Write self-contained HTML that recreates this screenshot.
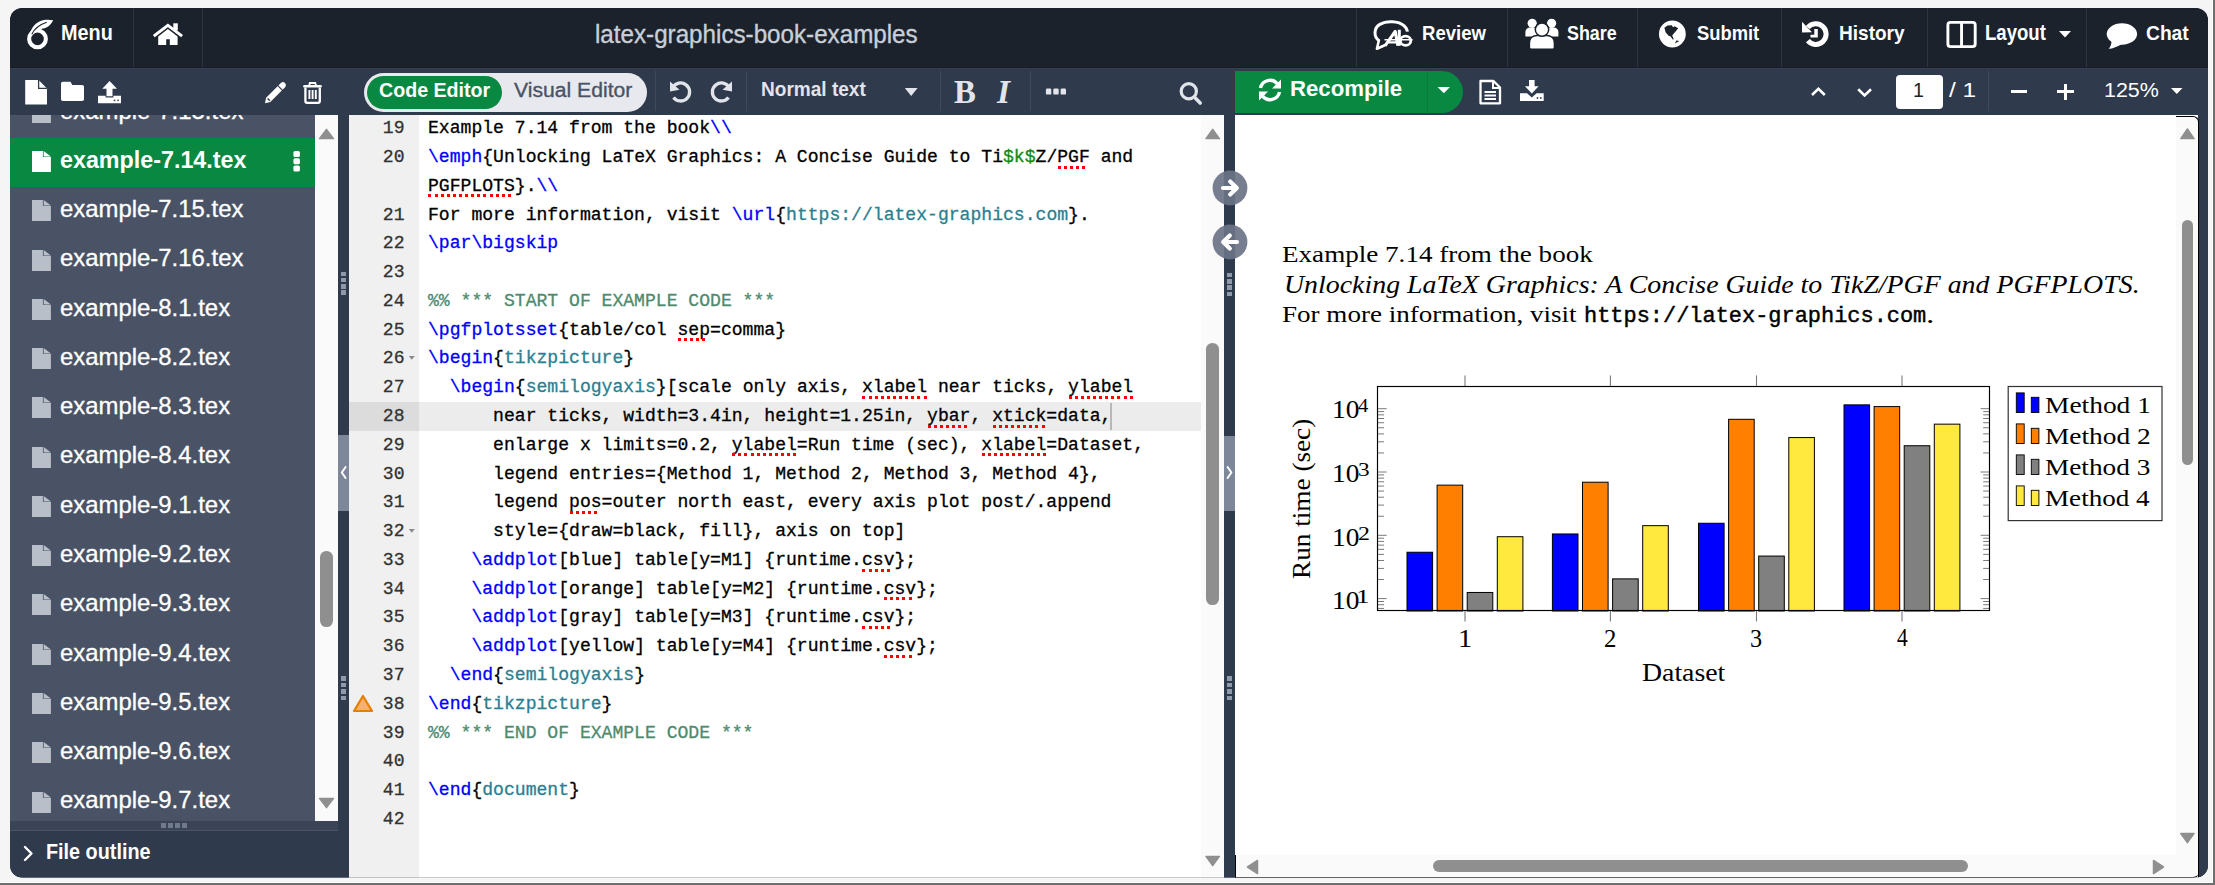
<!DOCTYPE html>
<html><head><meta charset="utf-8"><style>
html,body{margin:0;padding:0}
body{width:2215px;height:885px;background:#f5f5f5;position:relative;overflow:hidden}
.b{position:absolute;display:block}
.t{position:absolute;white-space:pre;line-height:1;transform-origin:0 0}
.code{position:absolute;white-space:pre;font-family:"Liberation Mono",monospace;line-height:1;color:#000;-webkit-text-stroke-width:0.3px}
</style></head><body>
<div class="b" style="left:0px;top:882px;width:2215.00px;height:1.00px;background:#ffffff;"></div>
<div class="b" style="left:2212px;top:0px;width:1.00px;height:885.00px;background:#ffffff;"></div>
<div class="b" style="left:0px;top:883px;width:2215.00px;height:2.00px;background:#6e6e6e;"></div>
<div class="b" style="left:2213px;top:0px;width:2.00px;height:885.00px;background:#6e6e6e;"></div>
<div class="b" style="left:0;top:0;width:2215px;height:885px;clip-path:inset(8px 7px 7.5px 10px round 12px)">
<div class="b" style="left:10px;top:8px;width:2198.00px;height:870.00px;background:#2f3a4c;"></div>
<div class="b" style="left:10px;top:8px;width:2198px;height:59px;background:#1b222c;border-radius:12px 12px 0 0"></div>
<div class="b" style="left:133px;top:8px;width:1.00px;height:59.00px;background:#2c3544;"></div>
<div class="b" style="left:202px;top:8px;width:1.00px;height:59.00px;background:#2c3544;"></div>
<div class="b" style="left:1356px;top:8px;width:1.00px;height:59.00px;background:#2c3544;"></div>
<div class="b" style="left:1507px;top:8px;width:1.00px;height:59.00px;background:#2c3544;"></div>
<div class="b" style="left:1637px;top:8px;width:1.00px;height:59.00px;background:#2c3544;"></div>
<div class="b" style="left:1781px;top:8px;width:1.00px;height:59.00px;background:#2c3544;"></div>
<div class="b" style="left:1927px;top:8px;width:1.00px;height:59.00px;background:#2c3544;"></div>
<div class="b" style="left:2086px;top:8px;width:1.00px;height:59.00px;background:#2c3544;"></div>
<svg class="b" style="left:22px;top:15px;" width="36" height="38" viewBox="0 0 36 38"><circle cx="15.5" cy="23.9" r="8.35" fill="none" stroke="#fff" stroke-width="4.1"/>
<path d="M7.6 20.5 C8.5 13 14 6.5 22 5 C25 4.5 28 4.6 31.2 5.2 C29 9.5 26 12.6 21 13.6 C16 14.5 12.5 16.5 10.6 20 Z" fill="#fff"/>
<path d="M9.8 19.2 C12.5 13.8 17 9.8 24.8 7.3" fill="none" stroke="#1b222c" stroke-width="1.1"/></svg>
<div class="t" style="left:60.56px;top:22.85px;font-size:21.24px;font-family:'Liberation Sans', sans-serif;color:#fff;font-weight:bold;transform:scaleX(0.9332);">Menu</div>
<svg class="b" style="left:150px;top:18px;" width="36" height="32" viewBox="0 0 36 32"><path d="M5 17.2 L17.9 7.3 L30.9 17.2" fill="none" stroke="#fff" stroke-width="3" stroke-linejoin="miter" stroke-linecap="square"/>
<rect x="23.3" y="5.3" width="4.5" height="7" fill="#fff"/>
<path d="M8.2 18.6 L17.9 11 L27.6 18.6 L27.6 27 L19.8 27 L19.8 21.3 L16.2 21.3 L16.2 27 L8.2 27 Z" fill="#fff"/></svg>
<div class="t" style="left:594.77px;top:22.45px;font-size:25.17px;font-family:'Liberation Sans', sans-serif;color:#c9cfd8;transform:scaleX(0.9615);-webkit-text-stroke:0.35px #c9cfd8;">latex-graphics-book-examples</div>
<svg class="b" style="left:1368px;top:16px;" width="50" height="38" viewBox="0 0 50 38"><path d="M10.8 24.6 C5.6 20.5 5.6 12.2 11.8 8.4 C18 4.6 30.5 4.6 36.2 9.8 C38.2 11.6 39.2 13.6 39.5 15.6" fill="none" stroke="#fff" stroke-width="3"/>
<path d="M10.9 24.2 L8.9 32.8 L16.2 29.5" fill="none" stroke="#fff" stroke-width="2.6" stroke-linejoin="round" stroke-linecap="round"/>
<path d="M17 29.8 L27.2 15.4 L29.9 29.8" fill="none" stroke="#fff" stroke-width="3.1" stroke-linejoin="round"/>
<path d="M20.2 26.4 L28.6 26.4" stroke="#fff" stroke-width="2.3"/>
<path d="M31.3 13.7 L31.3 29.8" stroke="#fff" stroke-width="3"/>
<ellipse cx="37.6" cy="24.8" rx="5.2" ry="4.6" fill="none" stroke="#fff" stroke-width="2.8"/>
<path d="M16.5 23.8 L44.6 23.8" stroke="#fff" stroke-width="1.4"/></svg>
<div class="t" style="left:1422.15px;top:23.38px;font-size:20.97px;font-family:'Liberation Sans', sans-serif;color:#fff;font-weight:bold;transform:scaleX(0.8834);">Review</div>
<svg class="b" style="left:1520px;top:14px;" width="44" height="38" viewBox="0 0 44 38"><circle cx="12.2" cy="9.3" r="4.6" fill="#fff"/><circle cx="31.6" cy="9.3" r="4.6" fill="#fff"/>
<path d="M5.4 21.5 L5.4 18.5 C5.4 15.5 7.5 13.6 10.5 13.6 L14 13.6 C17 13.6 18 15.5 18 18.5 L18 22.6 L5.4 22.6 Z" fill="#fff"/>
<path d="M38.4 21.5 L38.4 18.5 C38.4 15.5 36.3 13.6 33.3 13.6 L29.8 13.6 C26.8 13.6 25.8 15.5 25.8 18.5 L25.8 22.6 L38.4 22.6 Z" fill="#fff"/>
<path d="M9.4 33.5 L9.4 29 C9.4 24.3 12.5 21.4 17.2 21.4 L26.6 21.4 C31.3 21.4 34.4 24.3 34.4 29 L34.4 33.5 Q34.4 35.3 32.6 35.3 L11.2 35.3 Q9.4 35.3 9.4 33.5 Z" fill="#fff" stroke="#1b222c" stroke-width="1.5"/>
<circle cx="22" cy="15.6" r="6.7" fill="#fff" stroke="#1b222c" stroke-width="1.5"/></svg>
<div class="t" style="left:1566.96px;top:23.38px;font-size:20.97px;font-family:'Liberation Sans', sans-serif;color:#fff;font-weight:bold;transform:scaleX(0.8521);">Share</div>
<svg class="b" style="left:1656px;top:18px;" width="32" height="32" viewBox="0 0 32 32"><circle cx="16.35" cy="16.0" r="13.4" fill="#fff"/>
<path d="M8.4 9.8 L11.5 7.4 L15.8 7.2 L17 9.2 L18.6 8.3 L22.2 10.2 L19.8 13.2 L17.6 15.8 L16.2 17.6 L17.8 21.2 L16.8 21.4 L14.6 18.6 L12.6 17.8 L9.6 14.2 Z" fill="#1b222c"/>
<path d="M18.8 25.6 L20.4 22.4 L23.4 22.9 Z" fill="#1b222c"/></svg>
<div class="t" style="left:1697.05px;top:23.38px;font-size:20.97px;font-family:'Liberation Sans', sans-serif;color:#fff;font-weight:bold;transform:scaleX(0.8755);">Submit</div>
<svg class="b" style="left:1796px;top:16px;" width="38" height="36" viewBox="0 0 38 36"><path d="M11.9 11.5 A10.3 10.3 0 1 1 11.9 24.7" fill="none" stroke="#fff" stroke-width="5"/>
<path d="M6 5.7 L6 16.4 L16 16.2 Z" fill="#fff"/>
<path d="M18.3 13 H21.8 V21.6 H14.5 V18.8 H18.3 Z" fill="#fff"/></svg>
<div class="t" style="left:1839.22px;top:23.38px;font-size:20.97px;font-family:'Liberation Sans', sans-serif;color:#fff;font-weight:bold;transform:scaleX(0.9080);">History</div>
<svg class="b" style="left:1944px;top:18px;" width="34" height="32" viewBox="0 0 34 32"><rect x="3.9" y="4.4" width="27.3" height="24.2" rx="2.5" fill="none" stroke="#fff" stroke-width="2.9"/>
<rect x="16.1" y="4.4" width="2.9" height="24.2" fill="#fff"/></svg>
<div class="t" style="left:1985.35px;top:22.41px;font-size:22.11px;font-family:'Liberation Sans', sans-serif;color:#fff;font-weight:bold;transform:scaleX(0.8402);">Layout</div>
<svg class="b" style="left:2056px;top:28px;" width="18" height="12" viewBox="0 0 18 12"><path d="M3 3 L15 3 L9 9.5 Z" fill="#fff"/></svg>
<svg class="b" style="left:2103px;top:18px;" width="38" height="34" viewBox="0 0 38 34"><ellipse cx="18.9" cy="16" rx="15.2" ry="10.7" fill="#fff"/>
<path d="M8.5 22.5 C8.6 26 7.6 28.8 5.6 30.8 C10 30.6 14.5 28.6 18.5 26.2 Z" fill="#fff"/></svg>
<div class="t" style="left:2146.03px;top:23.38px;font-size:20.97px;font-family:'Liberation Sans', sans-serif;color:#fff;font-weight:bold;transform:scaleX(0.9166);">Chat</div>
<div class="b" style="left:10px;top:67px;width:2198.00px;height:48.00px;background:#2f3a4c;"></div>
<div class="b" style="left:10px;top:66.5px;width:2198.00px;height:1.00px;background:#181d26;"></div>
<div class="b" style="left:10px;top:67.5px;width:2198.00px;height:1.00px;background:#363e51;"></div>
<svg class="b" style="left:20px;top:75px;" width="110" height="35" viewBox="0 0 110 35"><path d="M5.2 5 L18.6 5 L27 13.4 L27 29.6 L5.2 29.6 Z" fill="#fff"/>
<path d="M18.6 5 L18.6 13.4 L27 13.4" fill="none" stroke="#2f3a4c" stroke-width="1.3"/>
<path d="M41 8.5 Q41 6.7 42.8 6.7 L50.5 6.7 L52.3 9.9 L62.2 9.9 Q64 9.9 64 11.7 L64 24.2 Q64 26 62.2 26 L42.8 26 Q41 26 41 24.2 Z" fill="#fff"/>
<path d="M89.6 6 L97 13.7 L92.5 13.7 L92.5 21.2 L86.5 21.2 L86.5 13.7 L82.3 13.7 Z" fill="#fff"/>
<path d="M78 20.7 L85.6 20.7 L85.6 22.6 L93.4 22.6 L93.4 20.7 L101 20.7 L101 28.2 L78 28.2 Z" fill="#fff"/>
<circle cx="94.5" cy="25.3" r="0.9" fill="#2f3a4c"/><circle cx="98" cy="25.3" r="0.9" fill="#2f3a4c"/></svg>
<svg class="b" style="left:258px;top:75px;" width="72" height="35" viewBox="0 0 72 35"><path d="M7 28.2 L8.1 22.7 L23.1 7.7 A3 3 0 0 1 27.3 11.9 L12.3 26.9 Z" fill="#fff"/>
<path d="M19.6 10.4 L24.8 15.6" stroke="#2f3a4c" stroke-width="1.2"/>
<path d="M9.6 23.6 L11.8 25.8" stroke="#2f3a4c" stroke-width="1.4"/>
<path d="M46.4 11.3 L62.6 11.3" stroke="#fff" stroke-width="2.5" stroke-linecap="round"/>
<path d="M51 11 L51.8 8 L57.3 8 L58.2 11" fill="none" stroke="#fff" stroke-width="1.8"/>
<path d="M47.4 12.5 L47.4 26 Q47.4 27.8 49.1 27.8 L60.1 27.8 Q61.8 27.8 61.8 26 L61.8 12.5" fill="none" stroke="#fff" stroke-width="2.3"/>
<path d="M51.4 15 L51.4 24 M54.6 15 L54.6 24 M57.8 15 L57.8 24" stroke="#fff" stroke-width="1.9"/></svg>
<div class="b" style="left:364px;top:73px;width:283px;height:39px;border-radius:20px;background:#e7e9ee"></div>
<div class="b" style="left:366.7px;top:75.9px;width:135.3px;height:32.8px;border-radius:17px;background:#098842"></div>
<div class="t" style="left:378.81px;top:80.15px;font-size:20.41px;font-family:'Liberation Sans', sans-serif;color:#fff;font-weight:bold;transform:scaleX(0.9618);">Code Editor</div>
<div class="t" style="left:513.79px;top:80.15px;font-size:20.41px;font-family:'Liberation Sans', sans-serif;color:#495365;transform:scaleX(1.0360);-webkit-text-stroke:0.35px #495365;">Visual Editor</div>
<div class="b" style="left:655px;top:71px;width:1.00px;height:40.00px;background:#3e4a5d;"></div>
<div class="b" style="left:746px;top:71px;width:1.00px;height:40.00px;background:#3e4a5d;"></div>
<div class="b" style="left:940px;top:71px;width:1.00px;height:40.00px;background:#3e4a5d;"></div>
<div class="b" style="left:1030px;top:71px;width:1.00px;height:40.00px;background:#3e4a5d;"></div>
<svg class="b" style="left:664px;top:76px;" width="74" height="32" viewBox="0 0 74 32"><path d="M8.8 11.5 A9 9 0 1 1 9.5 21.5" fill="none" stroke="#e1e4ea" stroke-width="3.3"/>
<path d="M6 5.5 L6 15.5 L15.5 13.8 Z" fill="#e1e4ea"/>
<path d="M65.2 11.5 A9 9 0 1 0 64.5 21.5" fill="none" stroke="#e1e4ea" stroke-width="3.3"/>
<path d="M68 5.5 L68 15.5 L58.5 13.8 Z" fill="#e1e4ea"/></svg>
<div class="t" style="left:760.71px;top:80.35px;font-size:19.59px;font-family:'Liberation Sans', sans-serif;color:#e1e4ea;font-weight:bold;transform:scaleX(0.9731);">Normal text</div>
<svg class="b" style="left:900px;top:84px;" width="22" height="14" viewBox="0 0 22 14"><path d="M4.8 4 L17.6 4 L11.2 11.9 Z" fill="#e1e4ea"/></svg>
<div class="t" style="left:954.43px;top:76.18px;font-size:32.67px;font-family:'Liberation Serif', serif;color:#e1e4ea;font-weight:bold;transform:scaleX(1.0030);">B</div>
<div class="t" style="left:997.03px;top:76.18px;font-size:32.67px;font-family:'Liberation Serif', serif;color:#e1e4ea;font-weight:bold;font-style:italic;transform:scaleX(1.0238);">I</div>
<svg class="b" style="left:1040px;top:84px;" width="32" height="14" viewBox="0 0 32 14"><rect x="5.9" y="4.6" width="5.4" height="6" rx="1.2" fill="#e1e4ea"/><rect x="13.3" y="4.6" width="5.4" height="6" rx="1.2" fill="#e1e4ea"/><rect x="20.6" y="4.6" width="5.4" height="6" rx="1.2" fill="#e1e4ea"/></svg>
<svg class="b" style="left:1175px;top:78px;" width="32" height="32" viewBox="0 0 32 32"><circle cx="13.8" cy="13.3" r="7.6" fill="none" stroke="#e1e4ea" stroke-width="3.2"/><path d="M19.3 19 L25.2 25" stroke="#e1e4ea" stroke-width="3.6" stroke-linecap="round"/></svg>
<div class="b" style="left:1235px;top:71px;width:228px;height:42px;border-radius:0 21px 21px 0;background:#098842"></div>
<div class="b" style="left:1427px;top:71px;width:1.00px;height:42.00px;background:#0a7a3c;"></div>
<svg class="b" style="left:1255px;top:76px;" width="32" height="28" viewBox="0 0 32 28"><path d="M5.5 12 A9.6 9.6 0 0 1 22.5 8" fill="none" stroke="#fff" stroke-width="3.4"/>
<path d="M26 3.5 L26 12.5 L17 12.5 Z" fill="#fff"/>
<path d="M24.5 16 A9.6 9.6 0 0 1 7.5 20" fill="none" stroke="#fff" stroke-width="3.4"/>
<path d="M4 24.5 L4 15.5 L13 15.5 Z" fill="#fff"/></svg>
<div class="t" style="left:1289.50px;top:78.21px;font-size:22.34px;font-family:'Liberation Sans', sans-serif;color:#fff;font-weight:bold;transform:scaleX(0.9935);">Recompile</div>
<svg class="b" style="left:1434px;top:84px;" width="20" height="12" viewBox="0 0 20 12"><path d="M3.6 3 L16 3 L9.8 9.2 Z" fill="#fff"/></svg>
<svg class="b" style="left:1476px;top:76px;" width="30" height="32" viewBox="0 0 30 32"><path d="M4.5 5 L17.5 5 L24 11.5 L24 27.3 L4.5 27.3 Z" fill="none" stroke="#fff" stroke-width="2.3" stroke-linejoin="round"/>
<path d="M17 5 L17 12 L24 12" fill="none" stroke="#fff" stroke-width="2"/>
<path d="M8.5 16 L20 16 M8.5 19.5 L20 19.5 M8.5 23 L20 23" stroke="#fff" stroke-width="1.8"/></svg>
<svg class="b" style="left:1516px;top:76px;" width="32" height="28" viewBox="0 0 32 28"><path d="M15.8 17.5 L9 10.2 L13 10.2 L13 4 L18.6 4 L18.6 10.2 L22.6 10.2 Z" fill="#fff"/>
<path d="M4 17.2 L11 17.2 L15.8 21.5 L20.6 17.2 L27.7 17.2 L27.7 25 L4 25 Z" fill="#fff"/>
<circle cx="21.5" cy="22" r="0.9" fill="#2f3a4c"/><circle cx="24.8" cy="22" r="0.9" fill="#2f3a4c"/></svg>
<svg class="b" style="left:1806px;top:82px;" width="70" height="18" viewBox="0 0 70 18"><path d="M6 13 L12.4 6.8 L18.8 13" fill="none" stroke="#fff" stroke-width="2.6"/><path d="M52.2 7.2 L58.6 13.4 L65 7.2" fill="none" stroke="#fff" stroke-width="2.6"/></svg>
<div class="b" style="left:1895.5px;top:75px;width:47px;height:34px;border-radius:4px;background:#fff"></div>
<div class="t" style="left:1912.83px;top:80.10px;font-size:20.95px;font-family:'Liberation Sans', sans-serif;color:#1b222c;transform:scaleX(0.9383);">1</div>
<div class="t" style="left:1949.00px;top:81.02px;font-size:19.86px;font-family:'Liberation Sans', sans-serif;color:#fff;transform:scaleX(1.2320);">/ 1</div>
<div class="b" style="left:1988px;top:71px;width:1.00px;height:40.00px;background:#3e4a5d;"></div>
<div class="b" style="left:2010.7px;top:90.3px;width:16.30px;height:2.80px;background:#fff;"></div>
<div class="b" style="left:2057px;top:90.3px;width:16.70px;height:2.80px;background:#fff;"></div>
<div class="b" style="left:2064px;top:84px;width:2.70px;height:16.00px;background:#fff;"></div>
<div class="t" style="left:2104.39px;top:80.35px;font-size:20.65px;font-family:'Liberation Sans', sans-serif;color:#fff;transform:scaleX(1.0390);">125%</div>
<svg class="b" style="left:2166px;top:84px;" width="22" height="14" viewBox="0 0 22 14"><path d="M5 4 L16.5 4 L10.75 10 Z" fill="#fff"/></svg>
<div class="b" style="left:10px;top:115px;width:305.00px;height:706.00px;background:#495365;"></div>
<div class="b" style="left:10px;top:138px;width:305.00px;height:49.00px;background:#098842;"></div>
<div class="b" style="left:10px;top:115px;width:305px;height:706px;overflow:hidden">
<svg class="b" style="left:22.1px;top:-13.27px" width="19" height="21" viewBox="0 0 19 21"><path d="M0 0 L10.9 0 L10.9 6.1 L18.9 6.1 L18.9 21 L0 21 Z" fill="#b9bfc9"/><path d="M11.7 0 L18.9 5.5 L11.7 5.5 Z" fill="#b9bfc9"/></svg>
<div class="t" style="left:50.48px;top:-15.45px;font-size:23.03px;font-family:'Liberation Sans', sans-serif;color:#fff;-webkit-text-stroke:0.3px #fff;transform:scaleX(1.0387)">example-7.13.tex</div>
<svg class="b" style="left:22.1px;top:36.00px" width="19" height="21" viewBox="0 0 19 21"><path d="M0 0 L10.9 0 L10.9 6.1 L18.9 6.1 L18.9 21 L0 21 Z" fill="#fff"/><path d="M11.7 0 L18.9 5.5 L11.7 5.5 Z" fill="#fff"/></svg>
<div class="t" style="left:50.07px;top:33.82px;font-size:23.03px;font-family:'Liberation Sans', sans-serif;font-weight:bold;color:#fff;transform:scaleX(1.0120)">example-7.14.tex</div>
<svg class="b" style="left:22.1px;top:85.27px" width="19" height="21" viewBox="0 0 19 21"><path d="M0 0 L10.9 0 L10.9 6.1 L18.9 6.1 L18.9 21 L0 21 Z" fill="#b9bfc9"/><path d="M11.7 0 L18.9 5.5 L11.7 5.5 Z" fill="#b9bfc9"/></svg>
<div class="t" style="left:50.48px;top:83.09px;font-size:23.03px;font-family:'Liberation Sans', sans-serif;color:#fff;-webkit-text-stroke:0.3px #fff;transform:scaleX(1.0387)">example-7.15.tex</div>
<svg class="b" style="left:22.1px;top:134.54px" width="19" height="21" viewBox="0 0 19 21"><path d="M0 0 L10.9 0 L10.9 6.1 L18.9 6.1 L18.9 21 L0 21 Z" fill="#b9bfc9"/><path d="M11.7 0 L18.9 5.5 L11.7 5.5 Z" fill="#b9bfc9"/></svg>
<div class="t" style="left:50.48px;top:132.36px;font-size:23.03px;font-family:'Liberation Sans', sans-serif;color:#fff;-webkit-text-stroke:0.3px #fff;transform:scaleX(1.0387)">example-7.16.tex</div>
<svg class="b" style="left:22.1px;top:183.81px" width="19" height="21" viewBox="0 0 19 21"><path d="M0 0 L10.9 0 L10.9 6.1 L18.9 6.1 L18.9 21 L0 21 Z" fill="#b9bfc9"/><path d="M11.7 0 L18.9 5.5 L11.7 5.5 Z" fill="#b9bfc9"/></svg>
<div class="t" style="left:50.48px;top:181.63px;font-size:23.03px;font-family:'Liberation Sans', sans-serif;color:#fff;-webkit-text-stroke:0.3px #fff;transform:scaleX(1.0387)">example-8.1.tex</div>
<svg class="b" style="left:22.1px;top:233.08px" width="19" height="21" viewBox="0 0 19 21"><path d="M0 0 L10.9 0 L10.9 6.1 L18.9 6.1 L18.9 21 L0 21 Z" fill="#b9bfc9"/><path d="M11.7 0 L18.9 5.5 L11.7 5.5 Z" fill="#b9bfc9"/></svg>
<div class="t" style="left:50.48px;top:230.90px;font-size:23.03px;font-family:'Liberation Sans', sans-serif;color:#fff;-webkit-text-stroke:0.3px #fff;transform:scaleX(1.0387)">example-8.2.tex</div>
<svg class="b" style="left:22.1px;top:282.35px" width="19" height="21" viewBox="0 0 19 21"><path d="M0 0 L10.9 0 L10.9 6.1 L18.9 6.1 L18.9 21 L0 21 Z" fill="#b9bfc9"/><path d="M11.7 0 L18.9 5.5 L11.7 5.5 Z" fill="#b9bfc9"/></svg>
<div class="t" style="left:50.48px;top:280.17px;font-size:23.03px;font-family:'Liberation Sans', sans-serif;color:#fff;-webkit-text-stroke:0.3px #fff;transform:scaleX(1.0387)">example-8.3.tex</div>
<svg class="b" style="left:22.1px;top:331.62px" width="19" height="21" viewBox="0 0 19 21"><path d="M0 0 L10.9 0 L10.9 6.1 L18.9 6.1 L18.9 21 L0 21 Z" fill="#b9bfc9"/><path d="M11.7 0 L18.9 5.5 L11.7 5.5 Z" fill="#b9bfc9"/></svg>
<div class="t" style="left:50.48px;top:329.44px;font-size:23.03px;font-family:'Liberation Sans', sans-serif;color:#fff;-webkit-text-stroke:0.3px #fff;transform:scaleX(1.0387)">example-8.4.tex</div>
<svg class="b" style="left:22.1px;top:380.89px" width="19" height="21" viewBox="0 0 19 21"><path d="M0 0 L10.9 0 L10.9 6.1 L18.9 6.1 L18.9 21 L0 21 Z" fill="#b9bfc9"/><path d="M11.7 0 L18.9 5.5 L11.7 5.5 Z" fill="#b9bfc9"/></svg>
<div class="t" style="left:50.48px;top:378.71px;font-size:23.03px;font-family:'Liberation Sans', sans-serif;color:#fff;-webkit-text-stroke:0.3px #fff;transform:scaleX(1.0387)">example-9.1.tex</div>
<svg class="b" style="left:22.1px;top:430.16px" width="19" height="21" viewBox="0 0 19 21"><path d="M0 0 L10.9 0 L10.9 6.1 L18.9 6.1 L18.9 21 L0 21 Z" fill="#b9bfc9"/><path d="M11.7 0 L18.9 5.5 L11.7 5.5 Z" fill="#b9bfc9"/></svg>
<div class="t" style="left:50.48px;top:427.98px;font-size:23.03px;font-family:'Liberation Sans', sans-serif;color:#fff;-webkit-text-stroke:0.3px #fff;transform:scaleX(1.0387)">example-9.2.tex</div>
<svg class="b" style="left:22.1px;top:479.43px" width="19" height="21" viewBox="0 0 19 21"><path d="M0 0 L10.9 0 L10.9 6.1 L18.9 6.1 L18.9 21 L0 21 Z" fill="#b9bfc9"/><path d="M11.7 0 L18.9 5.5 L11.7 5.5 Z" fill="#b9bfc9"/></svg>
<div class="t" style="left:50.48px;top:477.25px;font-size:23.03px;font-family:'Liberation Sans', sans-serif;color:#fff;-webkit-text-stroke:0.3px #fff;transform:scaleX(1.0387)">example-9.3.tex</div>
<svg class="b" style="left:22.1px;top:528.70px" width="19" height="21" viewBox="0 0 19 21"><path d="M0 0 L10.9 0 L10.9 6.1 L18.9 6.1 L18.9 21 L0 21 Z" fill="#b9bfc9"/><path d="M11.7 0 L18.9 5.5 L11.7 5.5 Z" fill="#b9bfc9"/></svg>
<div class="t" style="left:50.48px;top:526.52px;font-size:23.03px;font-family:'Liberation Sans', sans-serif;color:#fff;-webkit-text-stroke:0.3px #fff;transform:scaleX(1.0387)">example-9.4.tex</div>
<svg class="b" style="left:22.1px;top:577.97px" width="19" height="21" viewBox="0 0 19 21"><path d="M0 0 L10.9 0 L10.9 6.1 L18.9 6.1 L18.9 21 L0 21 Z" fill="#b9bfc9"/><path d="M11.7 0 L18.9 5.5 L11.7 5.5 Z" fill="#b9bfc9"/></svg>
<div class="t" style="left:50.48px;top:575.79px;font-size:23.03px;font-family:'Liberation Sans', sans-serif;color:#fff;-webkit-text-stroke:0.3px #fff;transform:scaleX(1.0387)">example-9.5.tex</div>
<svg class="b" style="left:22.1px;top:627.24px" width="19" height="21" viewBox="0 0 19 21"><path d="M0 0 L10.9 0 L10.9 6.1 L18.9 6.1 L18.9 21 L0 21 Z" fill="#b9bfc9"/><path d="M11.7 0 L18.9 5.5 L11.7 5.5 Z" fill="#b9bfc9"/></svg>
<div class="t" style="left:50.48px;top:625.06px;font-size:23.03px;font-family:'Liberation Sans', sans-serif;color:#fff;-webkit-text-stroke:0.3px #fff;transform:scaleX(1.0387)">example-9.6.tex</div>
<svg class="b" style="left:22.1px;top:676.51px" width="19" height="21" viewBox="0 0 19 21"><path d="M0 0 L10.9 0 L10.9 6.1 L18.9 6.1 L18.9 21 L0 21 Z" fill="#b9bfc9"/><path d="M11.7 0 L18.9 5.5 L11.7 5.5 Z" fill="#b9bfc9"/></svg>
<div class="t" style="left:50.48px;top:674.33px;font-size:23.03px;font-family:'Liberation Sans', sans-serif;color:#fff;-webkit-text-stroke:0.3px #fff;transform:scaleX(1.0387)">example-9.7.tex</div>
</div>
<svg class="b" style="left:290px;top:148px;" width="14" height="26" viewBox="0 0 14 26"><rect x="3.4" y="3" width="6.5" height="6" rx="1.6" fill="#fff"/><rect x="3.4" y="10.3" width="6.5" height="6" rx="1.6" fill="#fff"/><rect x="3.4" y="17.6" width="6.5" height="6" rx="1.6" fill="#fff"/></svg>
<div class="b" style="left:315px;top:115px;width:23.00px;height:706.00px;background:#fafafa;"></div>
<svg class="b" style="left:315px;top:125px;" width="23" height="16" viewBox="0 0 23 16"><path d="M4.5 13.6 L11.5 4.4 L18.5 13.6 Z" fill="#8f8f8f" stroke="#8f8f8f" stroke-width="1.5" stroke-linejoin="round"/></svg>
<div class="b" style="left:320.2px;top:550.5px;width:12.8px;height:76.3px;border-radius:6.4px;background:#8f8f8f"></div>
<svg class="b" style="left:315px;top:795px;" width="23" height="16" viewBox="0 0 23 16"><path d="M4.5 3.4 L11.5 12.6 L18.5 3.4 Z" fill="#8f8f8f" stroke="#8f8f8f" stroke-width="1.5" stroke-linejoin="round"/></svg>
<div class="b" style="left:10px;top:821px;width:328.00px;height:10.00px;background:#3a4456;"></div>
<div class="b" style="left:10px;top:830px;width:328.00px;height:1.50px;background:#4a5466;"></div>
<div class="b" style="left:161px;top:823.3px;width:5.00px;height:5.00px;background:#6f7a8c;"></div>
<div class="b" style="left:168px;top:823.3px;width:5.00px;height:5.00px;background:#6f7a8c;"></div>
<div class="b" style="left:175px;top:823.3px;width:5.00px;height:5.00px;background:#6f7a8c;"></div>
<div class="b" style="left:182px;top:823.3px;width:5.00px;height:5.00px;background:#6f7a8c;"></div>
<div class="b" style="left:10px;top:831px;width:328px;height:47px;background:#2f3a4c;border-radius:0 0 0 12px"></div>
<svg class="b" style="left:18px;top:840px;" width="20" height="26" viewBox="0 0 20 26"><path d="M7 7 L13.5 13.5 L7 20" fill="none" stroke="#fff" stroke-width="2.4" stroke-linecap="round" stroke-linejoin="round"/></svg>
<div class="t" style="left:46.16px;top:841.01px;font-size:22.34px;font-family:'Liberation Sans', sans-serif;color:#fff;font-weight:bold;transform:scaleX(0.8869);">File outline</div>
<div class="b" style="left:338px;top:115px;width:11.00px;height:763.00px;background:#2f3a4c;"></div>
<div class="b" style="left:338px;top:435.3px;width:11.00px;height:75.50px;background:#7d8799;"></div>
<svg class="b" style="left:338px;top:462px;" width="11" height="22" viewBox="0 0 11 22"><path d="M7.6 5 L3.8 10.5 L7.6 16" fill="none" stroke="#fff" stroke-width="2" stroke-linecap="round" stroke-linejoin="round"/></svg>
<div class="b" style="left:340.8px;top:271.5px;width:5.40px;height:4.60px;background:#8f99aa;"></div>
<div class="b" style="left:340.8px;top:277.8px;width:5.40px;height:4.60px;background:#8f99aa;"></div>
<div class="b" style="left:340.8px;top:284.1px;width:5.40px;height:4.60px;background:#8f99aa;"></div>
<div class="b" style="left:340.8px;top:290.4px;width:5.40px;height:4.60px;background:#8f99aa;"></div>
<div class="b" style="left:340.8px;top:676px;width:5.40px;height:4.60px;background:#8f99aa;"></div>
<div class="b" style="left:340.8px;top:682.5px;width:5.40px;height:4.60px;background:#8f99aa;"></div>
<div class="b" style="left:340.8px;top:689px;width:5.40px;height:4.60px;background:#8f99aa;"></div>
<div class="b" style="left:340.8px;top:695.5px;width:5.40px;height:4.60px;background:#8f99aa;"></div>
<div class="b" style="left:349px;top:115px;width:70.00px;height:763.00px;background:#f0f0f0;"></div>
<div class="b" style="left:419px;top:115px;width:782.00px;height:763.00px;background:#ffffff;"></div>
<div class="b" style="left:1201px;top:115px;width:23.00px;height:763.00px;background:#fafafa;"></div>
<div class="b" style="left:349px;top:402.1px;width:70.00px;height:28.50px;background:#dcdcdc;"></div>
<div class="b" style="left:419px;top:402.1px;width:782.00px;height:28.50px;background:#ececec;"></div>
<div class="b" style="left:1110.3px;top:402.5px;width:2.00px;height:27.80px;background:#b8b8b8;"></div>
<div class="code" style="left:382.80px;top:119.16px;font-size:18.083px;color:#333">19</div>
<div class="code" style="left:428.0px;top:119.16px;font-size:18.083px">Example 7.14 from the book<span style="color:#0000ff">\\</span></div>
<div class="code" style="left:382.80px;top:147.94px;font-size:18.083px;color:#333">20</div>
<div class="code" style="left:428.0px;top:147.94px;font-size:18.083px"><span style="color:#0000ff">\emph</span>{Unlocking LaTeX Graphics: A Concise Guide to Ti<span style="color:#118a11">$k$</span>Z/PGF and</div>
<div class="b" style="left:1058px;top:166px;width:3px;height:3px;background:#f00"></div>
<div class="b" style="left:1064px;top:166px;width:3px;height:3px;background:#f00"></div>
<div class="b" style="left:1070px;top:166px;width:3px;height:3px;background:#f00"></div>
<div class="b" style="left:1076px;top:166px;width:3px;height:3px;background:#f00"></div>
<div class="b" style="left:1082px;top:166px;width:3px;height:3px;background:#f00"></div>
<div class="code" style="left:428.0px;top:176.72px;font-size:18.083px">PGFPLOTS}.<span style="color:#0000ff">\\</span></div>
<div class="b" style="left:428px;top:194px;width:3px;height:3px;background:#f00"></div>
<div class="b" style="left:435px;top:194px;width:3px;height:3px;background:#f00"></div>
<div class="b" style="left:441px;top:194px;width:3px;height:3px;background:#f00"></div>
<div class="b" style="left:447px;top:194px;width:3px;height:3px;background:#f00"></div>
<div class="b" style="left:453px;top:194px;width:3px;height:3px;background:#f00"></div>
<div class="b" style="left:459px;top:194px;width:3px;height:3px;background:#f00"></div>
<div class="b" style="left:465px;top:194px;width:3px;height:3px;background:#f00"></div>
<div class="b" style="left:471px;top:194px;width:3px;height:3px;background:#f00"></div>
<div class="b" style="left:477px;top:194px;width:3px;height:3px;background:#f00"></div>
<div class="b" style="left:483px;top:194px;width:3px;height:3px;background:#f00"></div>
<div class="b" style="left:490px;top:194px;width:3px;height:3px;background:#f00"></div>
<div class="b" style="left:496px;top:194px;width:3px;height:3px;background:#f00"></div>
<div class="b" style="left:502px;top:194px;width:3px;height:3px;background:#f00"></div>
<div class="b" style="left:508px;top:194px;width:3px;height:3px;background:#f00"></div>
<div class="code" style="left:382.80px;top:205.50px;font-size:18.083px;color:#333">21</div>
<div class="code" style="left:428.0px;top:205.50px;font-size:18.083px">For more information, visit <span style="color:#0000ff">\url</span>{<span style="color:#2b7f91">https://latex-graphics.com</span>}.</div>
<div class="code" style="left:382.80px;top:234.28px;font-size:18.083px;color:#333">22</div>
<div class="code" style="left:428.0px;top:234.28px;font-size:18.083px"><span style="color:#0000ff">\par</span><span style="color:#0000ff">\bigskip</span></div>
<div class="code" style="left:382.80px;top:263.06px;font-size:18.083px;color:#333">23</div>
<div class="code" style="left:382.80px;top:291.84px;font-size:18.083px;color:#333">24</div>
<div class="code" style="left:428.0px;top:291.84px;font-size:18.083px"><span style="color:#4d8a6e">%% *** START OF EXAMPLE CODE ***</span></div>
<div class="code" style="left:382.80px;top:320.62px;font-size:18.083px;color:#333">25</div>
<div class="code" style="left:428.0px;top:320.62px;font-size:18.083px"><span style="color:#0000ff">\pgfplotsset</span>{table/col sep=comma}</div>
<div class="b" style="left:678px;top:338px;width:3px;height:3px;background:#f00"></div>
<div class="b" style="left:684px;top:338px;width:3px;height:3px;background:#f00"></div>
<div class="b" style="left:690px;top:338px;width:3px;height:3px;background:#f00"></div>
<div class="b" style="left:696px;top:338px;width:3px;height:3px;background:#f00"></div>
<div class="b" style="left:702px;top:338px;width:3px;height:3px;background:#f00"></div>
<div class="code" style="left:382.80px;top:349.40px;font-size:18.083px;color:#333">26</div>
<div class="code" style="left:428.0px;top:349.40px;font-size:18.083px"><span style="color:#0000ff">\begin</span>{<span style="color:#2b7f91">tikzpicture</span>}</div>
<div class="code" style="left:382.80px;top:378.18px;font-size:18.083px;color:#333">27</div>
<div class="code" style="left:428.0px;top:378.18px;font-size:18.083px">  <span style="color:#0000ff">\begin</span>{<span style="color:#2b7f91">semilogyaxis</span>}[scale only axis, xlabel near ticks, ylabel</div>
<div class="b" style="left:862px;top:396px;width:3px;height:3px;background:#f00"></div>
<div class="b" style="left:869px;top:396px;width:3px;height:3px;background:#f00"></div>
<div class="b" style="left:875px;top:396px;width:3px;height:3px;background:#f00"></div>
<div class="b" style="left:881px;top:396px;width:3px;height:3px;background:#f00"></div>
<div class="b" style="left:887px;top:396px;width:3px;height:3px;background:#f00"></div>
<div class="b" style="left:893px;top:396px;width:3px;height:3px;background:#f00"></div>
<div class="b" style="left:899px;top:396px;width:3px;height:3px;background:#f00"></div>
<div class="b" style="left:905px;top:396px;width:3px;height:3px;background:#f00"></div>
<div class="b" style="left:911px;top:396px;width:3px;height:3px;background:#f00"></div>
<div class="b" style="left:917px;top:396px;width:3px;height:3px;background:#f00"></div>
<div class="b" style="left:924px;top:396px;width:3px;height:3px;background:#f00"></div>
<div class="b" style="left:1069px;top:396px;width:3px;height:3px;background:#f00"></div>
<div class="b" style="left:1075px;top:396px;width:3px;height:3px;background:#f00"></div>
<div class="b" style="left:1081px;top:396px;width:3px;height:3px;background:#f00"></div>
<div class="b" style="left:1087px;top:396px;width:3px;height:3px;background:#f00"></div>
<div class="b" style="left:1093px;top:396px;width:3px;height:3px;background:#f00"></div>
<div class="b" style="left:1099px;top:396px;width:3px;height:3px;background:#f00"></div>
<div class="b" style="left:1105px;top:396px;width:3px;height:3px;background:#f00"></div>
<div class="b" style="left:1111px;top:396px;width:3px;height:3px;background:#f00"></div>
<div class="b" style="left:1117px;top:396px;width:3px;height:3px;background:#f00"></div>
<div class="b" style="left:1124px;top:396px;width:3px;height:3px;background:#f00"></div>
<div class="b" style="left:1130px;top:396px;width:3px;height:3px;background:#f00"></div>
<div class="code" style="left:382.80px;top:406.96px;font-size:18.083px;color:#333">28</div>
<div class="code" style="left:428.0px;top:406.96px;font-size:18.083px">      near ticks, width=3.4in, height=1.25in, ybar, xtick=data,</div>
<div class="b" style="left:928px;top:425px;width:3px;height:3px;background:#f00"></div>
<div class="b" style="left:934px;top:425px;width:3px;height:3px;background:#f00"></div>
<div class="b" style="left:940px;top:425px;width:3px;height:3px;background:#f00"></div>
<div class="b" style="left:946px;top:425px;width:3px;height:3px;background:#f00"></div>
<div class="b" style="left:952px;top:425px;width:3px;height:3px;background:#f00"></div>
<div class="b" style="left:958px;top:425px;width:3px;height:3px;background:#f00"></div>
<div class="b" style="left:964px;top:425px;width:3px;height:3px;background:#f00"></div>
<div class="b" style="left:993px;top:425px;width:3px;height:3px;background:#f00"></div>
<div class="b" style="left:999px;top:425px;width:3px;height:3px;background:#f00"></div>
<div class="b" style="left:1005px;top:425px;width:3px;height:3px;background:#f00"></div>
<div class="b" style="left:1011px;top:425px;width:3px;height:3px;background:#f00"></div>
<div class="b" style="left:1017px;top:425px;width:3px;height:3px;background:#f00"></div>
<div class="b" style="left:1023px;top:425px;width:3px;height:3px;background:#f00"></div>
<div class="b" style="left:1029px;top:425px;width:3px;height:3px;background:#f00"></div>
<div class="b" style="left:1035px;top:425px;width:3px;height:3px;background:#f00"></div>
<div class="b" style="left:1042px;top:425px;width:3px;height:3px;background:#f00"></div>
<div class="code" style="left:382.80px;top:435.74px;font-size:18.083px;color:#333">29</div>
<div class="code" style="left:428.0px;top:435.74px;font-size:18.083px">      enlarge x limits=0.2, ylabel=Run time (sec), xlabel=Dataset,</div>
<div class="b" style="left:732px;top:453px;width:3px;height:3px;background:#f00"></div>
<div class="b" style="left:738px;top:453px;width:3px;height:3px;background:#f00"></div>
<div class="b" style="left:744px;top:453px;width:3px;height:3px;background:#f00"></div>
<div class="b" style="left:751px;top:453px;width:3px;height:3px;background:#f00"></div>
<div class="b" style="left:757px;top:453px;width:3px;height:3px;background:#f00"></div>
<div class="b" style="left:763px;top:453px;width:3px;height:3px;background:#f00"></div>
<div class="b" style="left:769px;top:453px;width:3px;height:3px;background:#f00"></div>
<div class="b" style="left:775px;top:453px;width:3px;height:3px;background:#f00"></div>
<div class="b" style="left:781px;top:453px;width:3px;height:3px;background:#f00"></div>
<div class="b" style="left:787px;top:453px;width:3px;height:3px;background:#f00"></div>
<div class="b" style="left:793px;top:453px;width:3px;height:3px;background:#f00"></div>
<div class="b" style="left:982px;top:453px;width:3px;height:3px;background:#f00"></div>
<div class="b" style="left:988px;top:453px;width:3px;height:3px;background:#f00"></div>
<div class="b" style="left:994px;top:453px;width:3px;height:3px;background:#f00"></div>
<div class="b" style="left:1000px;top:453px;width:3px;height:3px;background:#f00"></div>
<div class="b" style="left:1006px;top:453px;width:3px;height:3px;background:#f00"></div>
<div class="b" style="left:1012px;top:453px;width:3px;height:3px;background:#f00"></div>
<div class="b" style="left:1018px;top:453px;width:3px;height:3px;background:#f00"></div>
<div class="b" style="left:1025px;top:453px;width:3px;height:3px;background:#f00"></div>
<div class="b" style="left:1031px;top:453px;width:3px;height:3px;background:#f00"></div>
<div class="b" style="left:1037px;top:453px;width:3px;height:3px;background:#f00"></div>
<div class="b" style="left:1043px;top:453px;width:3px;height:3px;background:#f00"></div>
<div class="code" style="left:382.80px;top:464.52px;font-size:18.083px;color:#333">30</div>
<div class="code" style="left:428.0px;top:464.52px;font-size:18.083px">      legend entries={Method 1, Method 2, Method 3, Method 4},</div>
<div class="code" style="left:382.80px;top:493.30px;font-size:18.083px;color:#333">31</div>
<div class="code" style="left:428.0px;top:493.30px;font-size:18.083px">      legend pos=outer north east, every axis plot post/.append</div>
<div class="b" style="left:570px;top:511px;width:3px;height:3px;background:#f00"></div>
<div class="b" style="left:576px;top:511px;width:3px;height:3px;background:#f00"></div>
<div class="b" style="left:582px;top:511px;width:3px;height:3px;background:#f00"></div>
<div class="b" style="left:588px;top:511px;width:3px;height:3px;background:#f00"></div>
<div class="b" style="left:594px;top:511px;width:3px;height:3px;background:#f00"></div>
<div class="code" style="left:382.80px;top:522.08px;font-size:18.083px;color:#333">32</div>
<div class="code" style="left:428.0px;top:522.08px;font-size:18.083px">      style={draw=black, fill}, axis on top]</div>
<div class="code" style="left:382.80px;top:550.86px;font-size:18.083px;color:#333">33</div>
<div class="code" style="left:428.0px;top:550.86px;font-size:18.083px">    <span style="color:#0000ff">\addplot</span>[blue] table[y=M1] {runtime.csv};</div>
<div class="b" style="left:862px;top:569px;width:3px;height:3px;background:#f00"></div>
<div class="b" style="left:869px;top:569px;width:3px;height:3px;background:#f00"></div>
<div class="b" style="left:875px;top:569px;width:3px;height:3px;background:#f00"></div>
<div class="b" style="left:881px;top:569px;width:3px;height:3px;background:#f00"></div>
<div class="b" style="left:887px;top:569px;width:3px;height:3px;background:#f00"></div>
<div class="code" style="left:382.80px;top:579.64px;font-size:18.083px;color:#333">34</div>
<div class="code" style="left:428.0px;top:579.64px;font-size:18.083px">    <span style="color:#0000ff">\addplot</span>[orange] table[y=M2] {runtime.csv};</div>
<div class="b" style="left:884px;top:597px;width:3px;height:3px;background:#f00"></div>
<div class="b" style="left:890px;top:597px;width:3px;height:3px;background:#f00"></div>
<div class="b" style="left:896px;top:597px;width:3px;height:3px;background:#f00"></div>
<div class="b" style="left:902px;top:597px;width:3px;height:3px;background:#f00"></div>
<div class="b" style="left:909px;top:597px;width:3px;height:3px;background:#f00"></div>
<div class="code" style="left:382.80px;top:608.42px;font-size:18.083px;color:#333">35</div>
<div class="code" style="left:428.0px;top:608.42px;font-size:18.083px">    <span style="color:#0000ff">\addplot</span>[gray] table[y=M3] {runtime.csv};</div>
<div class="b" style="left:862px;top:626px;width:3px;height:3px;background:#f00"></div>
<div class="b" style="left:869px;top:626px;width:3px;height:3px;background:#f00"></div>
<div class="b" style="left:875px;top:626px;width:3px;height:3px;background:#f00"></div>
<div class="b" style="left:881px;top:626px;width:3px;height:3px;background:#f00"></div>
<div class="b" style="left:887px;top:626px;width:3px;height:3px;background:#f00"></div>
<div class="code" style="left:382.80px;top:637.20px;font-size:18.083px;color:#333">36</div>
<div class="code" style="left:428.0px;top:637.20px;font-size:18.083px">    <span style="color:#0000ff">\addplot</span>[yellow] table[y=M4] {runtime.csv};</div>
<div class="b" style="left:884px;top:655px;width:3px;height:3px;background:#f00"></div>
<div class="b" style="left:890px;top:655px;width:3px;height:3px;background:#f00"></div>
<div class="b" style="left:896px;top:655px;width:3px;height:3px;background:#f00"></div>
<div class="b" style="left:902px;top:655px;width:3px;height:3px;background:#f00"></div>
<div class="b" style="left:909px;top:655px;width:3px;height:3px;background:#f00"></div>
<div class="code" style="left:382.80px;top:665.98px;font-size:18.083px;color:#333">37</div>
<div class="code" style="left:428.0px;top:665.98px;font-size:18.083px">  <span style="color:#0000ff">\end</span>{<span style="color:#2b7f91">semilogyaxis</span>}</div>
<div class="code" style="left:382.80px;top:694.76px;font-size:18.083px;color:#333">38</div>
<div class="code" style="left:428.0px;top:694.76px;font-size:18.083px"><span style="color:#0000ff">\end</span>{<span style="color:#2b7f91">tikzpicture</span>}</div>
<div class="code" style="left:382.80px;top:723.54px;font-size:18.083px;color:#333">39</div>
<div class="code" style="left:428.0px;top:723.54px;font-size:18.083px"><span style="color:#4d8a6e">%% *** END OF EXAMPLE CODE ***</span></div>
<div class="code" style="left:382.80px;top:752.32px;font-size:18.083px;color:#333">40</div>
<div class="code" style="left:382.80px;top:781.10px;font-size:18.083px;color:#333">41</div>
<div class="code" style="left:428.0px;top:781.10px;font-size:18.083px"><span style="color:#0000ff">\end</span>{<span style="color:#2b7f91">document</span>}</div>
<div class="code" style="left:382.80px;top:809.88px;font-size:18.083px;color:#333">42</div>
<svg class="b" style="left:406px;top:353.14px;" width="12" height="10" viewBox="0 0 12 10"><path d="M2.8 3 L8.8 3 L5.8 6.8 Z" fill="#8a8a8a"/></svg>
<svg class="b" style="left:406px;top:525.82px;" width="12" height="10" viewBox="0 0 12 10"><path d="M2.8 3 L8.8 3 L5.8 6.8 Z" fill="#8a8a8a"/></svg>
<svg class="b" style="left:352px;top:692px;" width="22" height="22" viewBox="0 0 22 22"><path d="M11 4 L20 19 L2 19 Z" fill="#f6b26b" stroke="#e67e00" stroke-width="2.2" stroke-linejoin="round"/></svg>
<svg class="b" style="left:1201px;top:125px;" width="23" height="16" viewBox="0 0 23 16"><path d="M5 13.6 L11.7 4.4 L18.4 13.6 Z" fill="#8f8f8f" stroke="#8f8f8f" stroke-width="1.5" stroke-linejoin="round"/></svg>
<div class="b" style="left:1206.3px;top:343px;width:12.5px;height:261.7px;border-radius:6.3px;background:#8f8f8f"></div>
<svg class="b" style="left:1201px;top:853px;" width="23" height="16" viewBox="0 0 23 16"><path d="M5 3.4 L11.7 12.6 L18.4 3.4 Z" fill="#8f8f8f" stroke="#8f8f8f" stroke-width="1.5" stroke-linejoin="round"/></svg>
<div class="b" style="left:1224px;top:115px;width:11.00px;height:763.00px;background:#2f3a4c;"></div>
<div class="b" style="left:1224px;top:436px;width:11.00px;height:74.50px;background:#7d8799;"></div>
<svg class="b" style="left:1224px;top:462px;" width="11" height="22" viewBox="0 0 11 22"><path d="M3.6 5 L7.4 10.5 L3.6 16" fill="none" stroke="#fff" stroke-width="2" stroke-linecap="round" stroke-linejoin="round"/></svg>
<div class="b" style="left:1226.8px;top:272.7px;width:5.40px;height:4.60px;background:#8f99aa;"></div>
<div class="b" style="left:1226.8px;top:279px;width:5.40px;height:4.60px;background:#8f99aa;"></div>
<div class="b" style="left:1226.8px;top:285.3px;width:5.40px;height:4.60px;background:#8f99aa;"></div>
<div class="b" style="left:1226.8px;top:291.6px;width:5.40px;height:4.60px;background:#8f99aa;"></div>
<div class="b" style="left:1226.8px;top:676px;width:5.40px;height:4.60px;background:#8f99aa;"></div>
<div class="b" style="left:1226.8px;top:682.5px;width:5.40px;height:4.60px;background:#8f99aa;"></div>
<div class="b" style="left:1226.8px;top:689px;width:5.40px;height:4.60px;background:#8f99aa;"></div>
<div class="b" style="left:1226.8px;top:695.5px;width:5.40px;height:4.60px;background:#8f99aa;"></div>
<div class="b" style="left:1235px;top:115px;width:963.00px;height:763.00px;background:#ffffff;"></div>
<div class="b" style="left:2176px;top:116px;width:22.00px;height:761.00px;background:#fafafa;"></div>
<div class="b" style="left:1235px;top:855px;width:963.00px;height:22.00px;background:#fafafa;"></div>
<div class="b" style="left:2176px;top:116px;width:23px;height:761.5px;border-top:1.5px solid #000;border-right:1.5px solid #000;border-top-right-radius:6px;box-sizing:border-box"></div>
<div class="b" style="left:1234.5px;top:855px;width:964.5px;height:22.5px;border-left:1.5px solid #000;border-bottom:1.5px solid #000;border-bottom-right-radius:6px;box-sizing:border-box"></div>
<svg class="b" style="left:2176px;top:124px;" width="22" height="18" viewBox="0 0 22 18"><path d="M4.8 14.6 L11.4 5 L18 14.6 Z" fill="#8f8f8f" stroke="#8f8f8f" stroke-width="1.5" stroke-linejoin="round"/></svg>
<div class="b" style="left:2181.5px;top:219.6px;width:11.5px;height:245.9px;border-radius:5.8px;background:#8f8f8f"></div>
<svg class="b" style="left:2176px;top:830px;" width="22" height="18" viewBox="0 0 22 18"><path d="M4.8 3.6 L11.4 12.6 L18 3.6 Z" fill="#8f8f8f" stroke="#8f8f8f" stroke-width="1.5" stroke-linejoin="round"/></svg>
<svg class="b" style="left:1240px;top:856px;" width="24" height="22" viewBox="0 0 24 22"><path d="M17.5 4.5 L7.5 11 L17.5 17.5 Z" fill="#8f8f8f" stroke="#8f8f8f" stroke-width="1.5" stroke-linejoin="round"/></svg>
<svg class="b" style="left:2148px;top:856px;" width="24" height="22" viewBox="0 0 24 22"><path d="M5.5 4.5 L15.5 11 L5.5 17.5 Z" fill="#8f8f8f" stroke="#8f8f8f" stroke-width="1.5" stroke-linejoin="round"/></svg>
<div class="b" style="left:1433.4px;top:860.3px;width:535px;height:12.2px;border-radius:6.1px;background:#8f8f8f"></div>
<div class="b" style="left:2199px;top:115px;width:9.00px;height:763.00px;background:#2f3a4c;"></div>
<div class="t" style="left:1282.15px;top:243.39px;font-size:23.26px;font-family:'Liberation Serif', serif;color:#000;transform:scaleX(1.1654);">Example 7.14 from the book</div>
<div class="t" style="left:1284.32px;top:272.90px;font-size:24.46px;font-family:'Liberation Serif', serif;color:#000;font-style:italic;transform:scaleX(1.1396);">Unlocking LaTeX Graphics: A Concise Guide to TikZ/PGF and PGFPLOTS.</div>
<div class="t" style="left:1282.16px;top:304.00px;font-size:22.41px;font-family:'Liberation Serif', serif;color:#000;transform:scaleX(1.2077);">For more information, visit</div>
<div class="t" style="left:1584.32px;top:306.04px;font-size:21.79px;font-family:'Liberation Mono', monospace;color:#000;transform:scaleX(1.0072);-webkit-text-stroke:0.45px #000;">https://latex-graphics.com</div>
<div class="t" style="left:1926.33px;top:301.85px;font-size:25.00px;font-family:'Liberation Serif', serif;color:#000;transform:scaleX(1.3333);">.</div>
<svg class="b" style="left:1270px;top:360px;" width="950" height="340" viewBox="0 0 950 340"><rect x="137.00" y="192.24" width="25.60" height="58.76" fill="#0000ff" stroke="#000" stroke-width="1"/><rect x="167.10" y="125.14" width="25.60" height="125.86" fill="#ff8000" stroke="#000" stroke-width="1"/><rect x="197.20" y="232.47" width="25.60" height="18.53" fill="#808080" stroke="#000" stroke-width="1"/><rect x="227.30" y="176.71" width="25.60" height="74.29" fill="#ffe93f" stroke="#000" stroke-width="1"/><rect x="282.40" y="173.96" width="25.60" height="77.04" fill="#0000ff" stroke="#000" stroke-width="1"/><rect x="312.50" y="122.20" width="25.60" height="128.80" fill="#ff8000" stroke="#000" stroke-width="1"/><rect x="342.60" y="218.87" width="25.60" height="32.13" fill="#808080" stroke="#000" stroke-width="1"/><rect x="372.70" y="165.66" width="25.60" height="85.34" fill="#ffe93f" stroke="#000" stroke-width="1"/><rect x="428.50" y="163.25" width="25.60" height="87.75" fill="#0000ff" stroke="#000" stroke-width="1"/><rect x="458.60" y="59.30" width="25.60" height="191.70" fill="#ff8000" stroke="#000" stroke-width="1"/><rect x="488.70" y="196.06" width="25.60" height="54.94" fill="#808080" stroke="#000" stroke-width="1"/><rect x="518.80" y="77.56" width="25.60" height="173.44" fill="#ffe93f" stroke="#000" stroke-width="1"/><rect x="574.00" y="44.86" width="25.60" height="206.14" fill="#0000ff" stroke="#000" stroke-width="1"/><rect x="604.10" y="46.58" width="25.60" height="204.42" fill="#ff8000" stroke="#000" stroke-width="1"/><rect x="634.20" y="85.73" width="25.60" height="165.27" fill="#808080" stroke="#000" stroke-width="1"/><rect x="664.30" y="64.15" width="25.60" height="186.85" fill="#ffe93f" stroke="#000" stroke-width="1"/><line x1="107.90" y1="248.41" x2="114.10" y2="248.41" stroke="#7a7a7a" stroke-width="1.0"/><line x1="719.40" y1="248.41" x2="713.20" y2="248.41" stroke="#7a7a7a" stroke-width="1.0"/><line x1="107.90" y1="244.73" x2="114.10" y2="244.73" stroke="#7a7a7a" stroke-width="1.0"/><line x1="719.40" y1="244.73" x2="713.20" y2="244.73" stroke="#7a7a7a" stroke-width="1.0"/><line x1="107.90" y1="241.50" x2="114.10" y2="241.50" stroke="#7a7a7a" stroke-width="1.0"/><line x1="719.40" y1="241.50" x2="713.20" y2="241.50" stroke="#7a7a7a" stroke-width="1.0"/><line x1="107.90" y1="238.60" x2="116.70" y2="238.60" stroke="#7a7a7a" stroke-width="1.0"/><line x1="719.40" y1="238.60" x2="710.60" y2="238.60" stroke="#7a7a7a" stroke-width="1.0"/><line x1="107.90" y1="219.54" x2="114.10" y2="219.54" stroke="#7a7a7a" stroke-width="1.0"/><line x1="719.40" y1="219.54" x2="713.20" y2="219.54" stroke="#7a7a7a" stroke-width="1.0"/><line x1="107.90" y1="208.40" x2="114.10" y2="208.40" stroke="#7a7a7a" stroke-width="1.0"/><line x1="719.40" y1="208.40" x2="713.20" y2="208.40" stroke="#7a7a7a" stroke-width="1.0"/><line x1="107.90" y1="200.49" x2="114.10" y2="200.49" stroke="#7a7a7a" stroke-width="1.0"/><line x1="719.40" y1="200.49" x2="713.20" y2="200.49" stroke="#7a7a7a" stroke-width="1.0"/><line x1="107.90" y1="194.36" x2="114.10" y2="194.36" stroke="#7a7a7a" stroke-width="1.0"/><line x1="719.40" y1="194.36" x2="713.20" y2="194.36" stroke="#7a7a7a" stroke-width="1.0"/><line x1="107.90" y1="189.34" x2="114.10" y2="189.34" stroke="#7a7a7a" stroke-width="1.0"/><line x1="719.40" y1="189.34" x2="713.20" y2="189.34" stroke="#7a7a7a" stroke-width="1.0"/><line x1="107.90" y1="185.11" x2="114.10" y2="185.11" stroke="#7a7a7a" stroke-width="1.0"/><line x1="719.40" y1="185.11" x2="713.20" y2="185.11" stroke="#7a7a7a" stroke-width="1.0"/><line x1="107.90" y1="181.43" x2="114.10" y2="181.43" stroke="#7a7a7a" stroke-width="1.0"/><line x1="719.40" y1="181.43" x2="713.20" y2="181.43" stroke="#7a7a7a" stroke-width="1.0"/><line x1="107.90" y1="178.20" x2="114.10" y2="178.20" stroke="#7a7a7a" stroke-width="1.0"/><line x1="719.40" y1="178.20" x2="713.20" y2="178.20" stroke="#7a7a7a" stroke-width="1.0"/><line x1="107.90" y1="175.30" x2="116.70" y2="175.30" stroke="#7a7a7a" stroke-width="1.0"/><line x1="719.40" y1="175.30" x2="710.60" y2="175.30" stroke="#7a7a7a" stroke-width="1.0"/><line x1="107.90" y1="156.24" x2="114.10" y2="156.24" stroke="#7a7a7a" stroke-width="1.0"/><line x1="719.40" y1="156.24" x2="713.20" y2="156.24" stroke="#7a7a7a" stroke-width="1.0"/><line x1="107.90" y1="145.10" x2="114.10" y2="145.10" stroke="#7a7a7a" stroke-width="1.0"/><line x1="719.40" y1="145.10" x2="713.20" y2="145.10" stroke="#7a7a7a" stroke-width="1.0"/><line x1="107.90" y1="137.19" x2="114.10" y2="137.19" stroke="#7a7a7a" stroke-width="1.0"/><line x1="719.40" y1="137.19" x2="713.20" y2="137.19" stroke="#7a7a7a" stroke-width="1.0"/><line x1="107.90" y1="131.06" x2="114.10" y2="131.06" stroke="#7a7a7a" stroke-width="1.0"/><line x1="719.40" y1="131.06" x2="713.20" y2="131.06" stroke="#7a7a7a" stroke-width="1.0"/><line x1="107.90" y1="126.04" x2="114.10" y2="126.04" stroke="#7a7a7a" stroke-width="1.0"/><line x1="719.40" y1="126.04" x2="713.20" y2="126.04" stroke="#7a7a7a" stroke-width="1.0"/><line x1="107.90" y1="121.81" x2="114.10" y2="121.81" stroke="#7a7a7a" stroke-width="1.0"/><line x1="719.40" y1="121.81" x2="713.20" y2="121.81" stroke="#7a7a7a" stroke-width="1.0"/><line x1="107.90" y1="118.13" x2="114.10" y2="118.13" stroke="#7a7a7a" stroke-width="1.0"/><line x1="719.40" y1="118.13" x2="713.20" y2="118.13" stroke="#7a7a7a" stroke-width="1.0"/><line x1="107.90" y1="114.90" x2="114.10" y2="114.90" stroke="#7a7a7a" stroke-width="1.0"/><line x1="719.40" y1="114.90" x2="713.20" y2="114.90" stroke="#7a7a7a" stroke-width="1.0"/><line x1="107.90" y1="112.00" x2="116.70" y2="112.00" stroke="#7a7a7a" stroke-width="1.0"/><line x1="719.40" y1="112.00" x2="710.60" y2="112.00" stroke="#7a7a7a" stroke-width="1.0"/><line x1="107.90" y1="92.94" x2="114.10" y2="92.94" stroke="#7a7a7a" stroke-width="1.0"/><line x1="719.40" y1="92.94" x2="713.20" y2="92.94" stroke="#7a7a7a" stroke-width="1.0"/><line x1="107.90" y1="81.80" x2="114.10" y2="81.80" stroke="#7a7a7a" stroke-width="1.0"/><line x1="719.40" y1="81.80" x2="713.20" y2="81.80" stroke="#7a7a7a" stroke-width="1.0"/><line x1="107.90" y1="73.89" x2="114.10" y2="73.89" stroke="#7a7a7a" stroke-width="1.0"/><line x1="719.40" y1="73.89" x2="713.20" y2="73.89" stroke="#7a7a7a" stroke-width="1.0"/><line x1="107.90" y1="67.76" x2="114.10" y2="67.76" stroke="#7a7a7a" stroke-width="1.0"/><line x1="719.40" y1="67.76" x2="713.20" y2="67.76" stroke="#7a7a7a" stroke-width="1.0"/><line x1="107.90" y1="62.74" x2="114.10" y2="62.74" stroke="#7a7a7a" stroke-width="1.0"/><line x1="719.40" y1="62.74" x2="713.20" y2="62.74" stroke="#7a7a7a" stroke-width="1.0"/><line x1="107.90" y1="58.51" x2="114.10" y2="58.51" stroke="#7a7a7a" stroke-width="1.0"/><line x1="719.40" y1="58.51" x2="713.20" y2="58.51" stroke="#7a7a7a" stroke-width="1.0"/><line x1="107.90" y1="54.83" x2="114.10" y2="54.83" stroke="#7a7a7a" stroke-width="1.0"/><line x1="719.40" y1="54.83" x2="713.20" y2="54.83" stroke="#7a7a7a" stroke-width="1.0"/><line x1="107.90" y1="51.60" x2="114.10" y2="51.60" stroke="#7a7a7a" stroke-width="1.0"/><line x1="719.40" y1="51.60" x2="713.20" y2="51.60" stroke="#7a7a7a" stroke-width="1.0"/><line x1="107.90" y1="48.70" x2="116.70" y2="48.70" stroke="#7a7a7a" stroke-width="1.0"/><line x1="719.40" y1="48.70" x2="710.60" y2="48.70" stroke="#7a7a7a" stroke-width="1.0"/><line x1="195.00" y1="15.40" x2="195.00" y2="26.10" stroke="#7a7a7a" stroke-width="1.1"/><line x1="195.00" y1="251.00" x2="195.00" y2="261.50" stroke="#7a7a7a" stroke-width="1.1"/><line x1="340.40" y1="15.40" x2="340.40" y2="26.10" stroke="#7a7a7a" stroke-width="1.1"/><line x1="340.40" y1="251.00" x2="340.40" y2="261.50" stroke="#7a7a7a" stroke-width="1.1"/><line x1="486.50" y1="15.40" x2="486.50" y2="26.10" stroke="#7a7a7a" stroke-width="1.1"/><line x1="486.50" y1="251.00" x2="486.50" y2="261.50" stroke="#7a7a7a" stroke-width="1.1"/><line x1="632.00" y1="15.40" x2="632.00" y2="26.10" stroke="#7a7a7a" stroke-width="1.1"/><line x1="632.00" y1="251.00" x2="632.00" y2="261.50" stroke="#7a7a7a" stroke-width="1.1"/><rect x="107.5" y="26.5" width="612" height="224" fill="none" stroke="#000" stroke-width="1.15"/><rect x="738.20" y="26.50" width="153.80" height="134.10" fill="#fff" stroke="#333" stroke-width="1.2"/><rect x="746.30" y="32.90" width="7.9" height="19.6" fill="#0000ff" stroke="#000" stroke-width="0.9"/><rect x="761.30" y="37.30" width="7.6" height="15.2" fill="#0000ff" stroke="#000" stroke-width="0.9"/><rect x="746.30" y="63.90" width="7.9" height="19.6" fill="#ff8000" stroke="#000" stroke-width="0.9"/><rect x="761.30" y="68.30" width="7.6" height="15.2" fill="#ff8000" stroke="#000" stroke-width="0.9"/><rect x="746.30" y="94.90" width="7.9" height="19.6" fill="#808080" stroke="#000" stroke-width="0.9"/><rect x="761.30" y="99.30" width="7.6" height="15.2" fill="#808080" stroke="#000" stroke-width="0.9"/><rect x="746.30" y="125.90" width="7.9" height="19.6" fill="#ffe93f" stroke="#000" stroke-width="0.9"/><rect x="761.30" y="130.30" width="7.6" height="15.2" fill="#ffe93f" stroke="#000" stroke-width="0.9"/></svg>
<div class="t" style="left:2044.75px;top:394.09px;font-size:23.74px;font-family:'Liberation Serif', serif;color:#000;transform:scaleX(1.1556);">Method 1</div>
<div class="t" style="left:2044.75px;top:425.09px;font-size:23.74px;font-family:'Liberation Serif', serif;color:#000;transform:scaleX(1.1541);">Method 2</div>
<div class="t" style="left:2044.75px;top:456.09px;font-size:23.74px;font-family:'Liberation Serif', serif;color:#000;transform:scaleX(1.1495);">Method 3</div>
<div class="t" style="left:2044.75px;top:487.09px;font-size:23.74px;font-family:'Liberation Serif', serif;color:#000;transform:scaleX(1.1420);">Method 4</div>
<div class="t" style="left:1331.60px;top:398.38px;font-size:24.96px;font-family:'Liberation Serif', serif;color:#000;transform:scaleX(1.0988);">10</div>
<div class="t" style="left:1358.29px;top:398.40px;font-size:17.95px;font-family:'Liberation Serif', serif;color:#000;transform:scaleX(1.1504);">4</div>
<div class="t" style="left:1331.60px;top:461.98px;font-size:24.96px;font-family:'Liberation Serif', serif;color:#000;transform:scaleX(1.0988);">10</div>
<div class="t" style="left:1357.59px;top:462.12px;font-size:17.81px;font-family:'Liberation Serif', serif;color:#000;transform:scaleX(1.3066);">3</div>
<div class="t" style="left:1331.60px;top:525.88px;font-size:24.96px;font-family:'Liberation Serif', serif;color:#000;transform:scaleX(1.0988);">10</div>
<div class="t" style="left:1357.69px;top:526.02px;font-size:17.81px;font-family:'Liberation Serif', serif;color:#000;transform:scaleX(1.3391);">2</div>
<div class="t" style="left:1331.60px;top:588.78px;font-size:24.96px;font-family:'Liberation Serif', serif;color:#000;transform:scaleX(1.0988);">10</div>
<div class="t" style="left:1356.32px;top:588.86px;font-size:17.88px;font-family:'Liberation Serif', serif;color:#000;transform:scaleX(1.5233);">1</div>
<div class="t" style="left:1457.52px;top:626.55px;font-size:24.39px;font-family:'Liberation Serif', serif;color:#000;transform:scaleX(1.1629);">1</div>
<div class="t" style="left:1604.34px;top:626.63px;font-size:24.30px;font-family:'Liberation Serif', serif;color:#000;transform:scaleX(1.0223);">2</div>
<div class="t" style="left:1750.35px;top:626.63px;font-size:24.30px;font-family:'Liberation Serif', serif;color:#000;transform:scaleX(0.9976);">3</div>
<div class="t" style="left:1896.57px;top:626.48px;font-size:24.49px;font-family:'Liberation Serif', serif;color:#000;transform:scaleX(0.8782);">4</div>
<div class="t" style="left:1641.54px;top:659.82px;font-size:25.04px;font-family:'Liberation Serif', serif;color:#000;transform:scaleX(1.1099);">Dataset</div>
<div class="t" style="left:1301.50px;top:579.05px;font-size:24.43px;font-family:'Liberation Serif', serif;color:#000;line-height:0;transform-origin:0 0;transform:rotate(-90deg) scaleX(1.1147)">Run time (sec)</div>
<svg class="b" style="left:1211.7px;top:169.5px" width="36" height="36" viewBox="-18 -18 36 36"><circle cx="0" cy="0" r="17.4" fill="#6b7385" fill-opacity="0.92"/><path d="M-7 0 L6 0 M0.2 -6.6 L6.8 0 L0.2 6.6" fill="none" stroke="#fff" stroke-width="4.2" stroke-linecap="round" stroke-linejoin="round"/></svg>
<svg class="b" style="left:1211.7px;top:223.7px" width="36" height="36" viewBox="-18 -18 36 36"><circle cx="0" cy="0" r="17.4" fill="#6b7385" fill-opacity="0.92"/><path d="M7 0 L-6 0 M-0.2 -6.6 L-6.8 0 L-0.2 6.6" fill="none" stroke="#fff" stroke-width="4.2" stroke-linecap="round" stroke-linejoin="round"/></svg>
</div>
</body></html>
